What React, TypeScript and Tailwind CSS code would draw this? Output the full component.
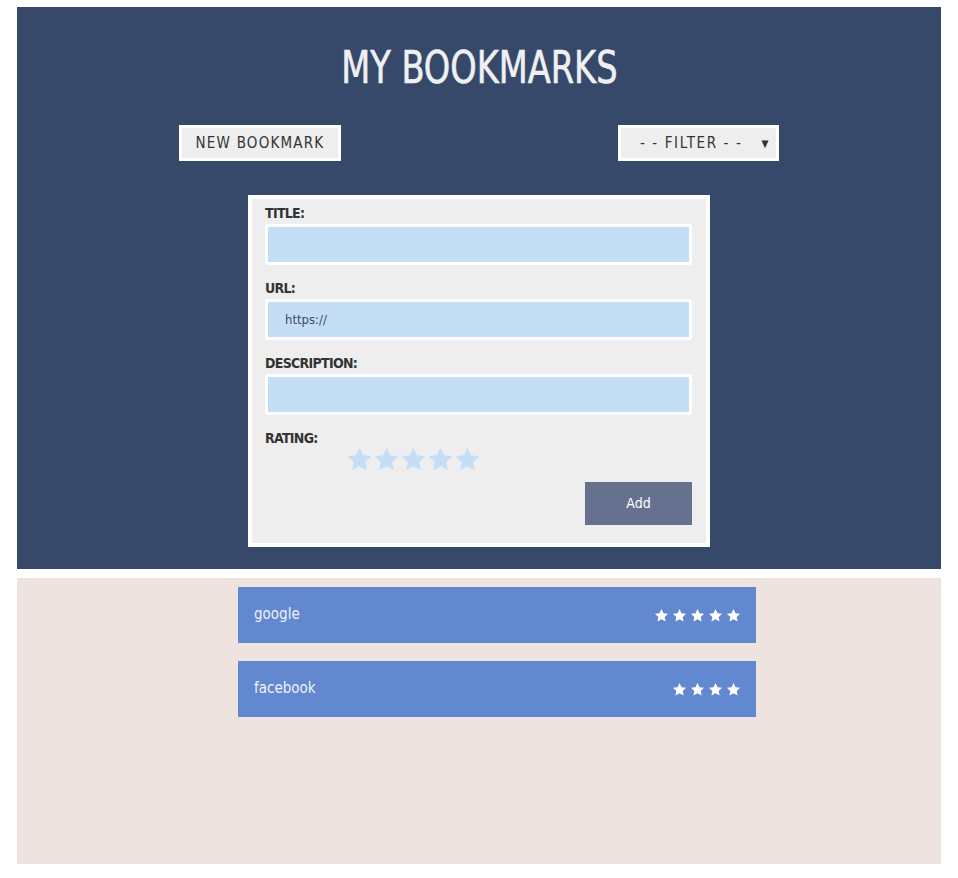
import React from "react";

const font = { fontFamily: '"DejaVu Sans Condensed", "Liberation Sans", sans-serif' };

function Star({ className }: { className?: string }) {
  return (
    <svg viewBox="0 0 24 24" className={className} fill="currentColor">
      <path d="M12 1.5l3.2 6.7 7.3.9-5.4 5.1 1.4 7.3L12 18l-6.5 3.5 1.4-7.3L1.5 9.1l7.3-.9z" />
    </svg>
  );
}

function Field({ label, value }: { label: string; value?: string }) {
  return (
    <div className="flex flex-col">
      <label className="text-[14px] font-bold tracking-[-0.7px] text-[#333] leading-[16px] h-[16px]">{label}</label>
      <div className="mt-[3px] h-[41px] border-[3px] border-white rounded-[3px] bg-[#c4def6] flex items-center px-[17px] text-[13px] text-[#3f4c66]">
        {value}
      </div>
    </div>
  );
}

export default function App() {
  return (
    <div className="bg-white min-h-[878px] px-[17px] pt-[7px]" style={font}>
      <div className="bg-[#36496b] h-[562px] flex flex-col items-center">
        <h1 className="mt-[36px] text-[45px] leading-[50px] text-[#f0f0f2] scale-x-[0.83] [-webkit-text-stroke:0.6px_#f0f0f2]">MY BOOKMARKS</h1>
        <div className="mt-[32px] w-[600px] flex justify-between">
          <button className="w-[162px] h-[36px] border-[3px] border-white bg-[#eeeeee] text-[#333] text-[15px] tracking-[1.2px]">NEW BOOKMARK</button>
          <div className="w-[161px] h-[36px] border-[3px] border-white bg-[#eeeeee] text-[#333] text-[15px] tracking-[1.6px] flex items-center relative">
            <span className="ml-[19px]">- - FILTER - -</span>
            <span className="absolute right-[6px] text-[10px]">▼</span>
          </div>
        </div>
        <div className="mt-[34px] w-[462px] h-[352px] border-[4px] border-white bg-[#eeeeee] pl-[13px] pr-[14px] pt-[6px]">
          <div className="flex flex-col gap-[15px]">
            <Field label="TITLE:" />
            <Field label="URL:" value="https://" />
            <Field label="DESCRIPTION:" />
          </div>
          <div className="mt-[15px] text-[14px] font-bold tracking-[-0.7px] text-[#333] leading-[16px] h-[16px]">RATING:</div>
          <div className="ml-[81px] mt-[0px] flex text-[#c4def6]">
            {[0, 1, 2, 3, 4].map((i) => (
              <Star key={i} className="w-[27px] h-[27px]" />
            ))}
          </div>
          <div className="flex justify-end mt-[9px]">
            <button className="w-[107px] h-[43px] bg-[#66718f] text-white text-[14px]">Add</button>
          </div>
        </div>
      </div>
      <div className="mt-[9px] bg-[#efe3df] h-[286px] flex flex-col items-start pl-[221px] pt-[9px] gap-[18px]">
        {[
          { name: "google", n: 5 },
          { name: "facebook", n: 4 },
        ].map((b) => (
          <div key={b.name} className="w-[518px] h-[56px] bg-[#6288cf] flex items-center justify-between pl-[16px] pr-[15px] text-[15px] text-[#eef2fb]">
            <span className="-mt-[2px]">{b.name}</span>
            <span className="flex gap-[3px] text-white">
              {Array.from({ length: b.n }).map((_, i) => (
                <Star key={i} className="w-[15px] h-[15px]" />
              ))}
            </span>
          </div>
        ))}
      </div>
    </div>
  );
}
